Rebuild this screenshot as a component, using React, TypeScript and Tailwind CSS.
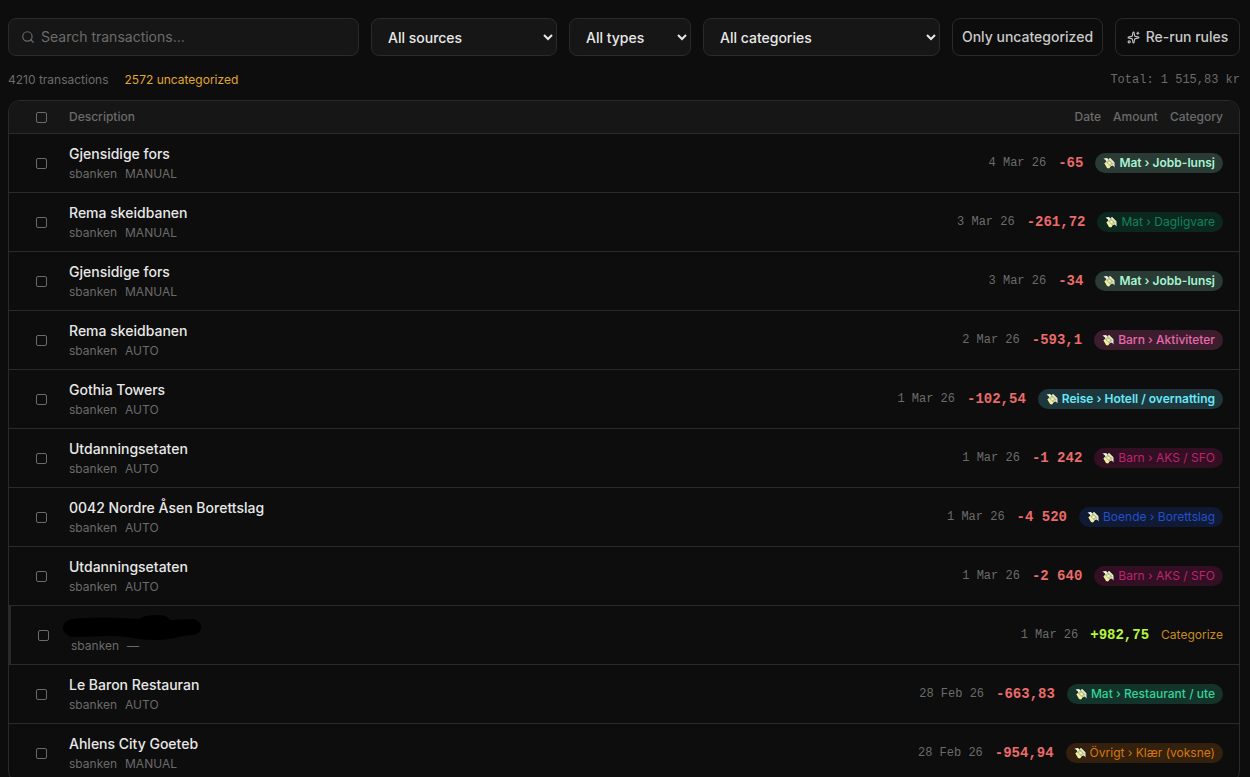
import React, { useState } from 'react';
import { Search, Sparkles } from 'lucide-react';
import clsx from 'clsx';

interface Transaction {
  id: number;
  description: string | null;
  method: string;
  date: string;
  amount: string;
  category?: string;
  chip?: string;
}

const JOBB_LUNSJ = 'bg-[#2a3a34] text-[#a7f3d0] font-semibold';
const AKS_SFO = 'bg-[#320f22] text-[#be2470]';

const TRANSACTIONS: Transaction[] = [
  { id: 1, description: 'Gjensidige fors', method: 'MANUAL', date: '4 Mar 26', amount: '-65', category: 'Mat › Jobb-lunsj', chip: JOBB_LUNSJ },
  { id: 2, description: 'Rema skeidbanen', method: 'MANUAL', date: '3 Mar 26', amount: '-261,72', category: 'Mat › Dagligvare', chip: 'bg-[#0c271e] text-[#10845f]' },
  { id: 3, description: 'Gjensidige fors', method: 'MANUAL', date: '3 Mar 26', amount: '-34', category: 'Mat › Jobb-lunsj', chip: JOBB_LUNSJ },
  { id: 4, description: 'Rema skeidbanen', method: 'AUTO', date: '2 Mar 26', amount: '-593,1', category: 'Barn › Aktiviteter', chip: 'bg-[#3b1d2e] text-[#e669ab] font-medium' },
  { id: 5, description: 'Gothia Towers', method: 'AUTO', date: '1 Mar 26', amount: '-102,54', category: 'Reise › Hotell / overnatting', chip: 'bg-[#1d373c] text-[#67e8f9] font-semibold' },
  { id: 6, description: 'Utdanningsetaten', method: 'AUTO', date: '1 Mar 26', amount: '-1 242', category: 'Barn › AKS / SFO', chip: AKS_SFO },
  { id: 7, description: '0042 Nordre Åsen Borettslag', method: 'AUTO', date: '1 Mar 26', amount: '-4 520', category: 'Boende › Borettslag', chip: 'bg-[#101a34] text-[#2350c8]' },
  { id: 8, description: 'Utdanningsetaten', method: 'AUTO', date: '1 Mar 26', amount: '-2 640', category: 'Barn › AKS / SFO', chip: AKS_SFO },
  { id: 9, description: null, method: '—', date: '1 Mar 26', amount: '+982,75' },
  { id: 10, description: 'Le Baron Restauran', method: 'AUTO', date: '28 Feb 26', amount: '-663,83', category: 'Mat › Restaurant / ute', chip: 'bg-[#14332a] text-[#34d399] font-medium' },
  { id: 11, description: 'Ahlens City Goeteb', method: 'MANUAL', date: '28 Feb 26', amount: '-954,94', category: 'Övrigt › Klær (voksne)', chip: 'bg-[#33200d] text-[#d9780b]' },
];

const SELECT_CLASS = 'h-[38px] px-3 bg-[#161616] border border-[#2a2a2a] rounded-lg text-sm font-medium text-[#e8e8e8] outline-none';
const BUTTON_CLASS = 'h-[38px] shrink-0 flex items-center justify-center gap-1.5 border border-[#2a2a2a] rounded-lg text-sm font-medium text-[#c9c9c9] whitespace-nowrap hover:bg-[#161616]';
const CHECKBOX_CLASS = 'appearance-none block size-[11px] border border-[#6b6b6b] rounded-[2px] checked:bg-[#6b6b6b]';

function MoneyIcon() {
  return (
    <svg viewBox="0 0 24 24" className="size-3 shrink-0" aria-hidden="true">
      <path d="M1 3 8 2l4 4-5 5-1-4z" fill="#f2f4ea" />
      <path d="M15 13l8-1v9l-3-4-4 1z" fill="#f2f4ea" />
      <path d="M3 13 14 2l9 9L12 22z" fill="#c6d094" />
      <path d="M3 13l3-3 9 9-3 4-4-1z" fill="#f3ee9c" />
      <path d="M14 2l9 9-2 2-9-9z" fill="#e6ebc8" />
      <path d="M7 10l8 8M11 6l9 9" stroke="#7f8a5c" strokeWidth="1" />
      <circle cx="13" cy="12" r="2.6" fill="#eef2cf" />
    </svg>
  );
}

function Redacted() {
  return (
    <svg viewBox="0 0 138 26" className="absolute -left-2 -top-px w-[138px] h-[26px]" aria-hidden="true">
      <path
        d="M9 4C30 2 55 3 76 4C80 1 87 0 95 0C101 0 105 2 107 5L130 4C135 5 138 8 138 12C138 17 134 20 129 20C118 20 111 25 92 25C75 25 66 21 50 21C35 21 24 22 10 22C4 21 0 17 0 13C0 8 4 5 9 4Z"
        fill="#000"
      />
    </svg>
  );
}

export default function App() {
  const [search, setSearch] = useState('');
  const [selected, setSelected] = useState<number[]>([]);

  const visible = TRANSACTIONS.filter(t =>
    (t.description ?? '').toLowerCase().includes(search.toLowerCase())
  );

  const toggle = (id: number) => {
    setSelected(prev => (prev.includes(id) ? prev.filter(x => x !== id) : [...prev, id]));
  };

  const toggleAll = () => {
    setSelected(selected.length === visible.length ? [] : visible.map(t => t.id));
  };

  return (
    <div className="min-h-screen bg-[#0d0d0d] px-2 pt-[18px] font-['Inter',sans-serif] text-[#e8e8e8]">
      <div className="flex pr-0.5 gap-3">
        <label className="flex-1 min-w-0 h-[38px] flex items-center gap-1.5 px-3 bg-[#161616] border border-[#2a2a2a] rounded-lg">
          <Search size={14} className="text-[#6b6b6b] shrink-0" />
          <input
            type="text"
            aria-label="Search transactions"
            placeholder="Search transactions…"
            value={search}
            onChange={(e) => setSearch(e.target.value)}
            className="flex-1 min-w-0 bg-transparent outline-none text-sm placeholder:text-[#6b6b6b]"
          />
        </label>
        <select aria-label="Source" className={clsx(SELECT_CLASS, 'w-[186px]')}>
          <option>All sources</option>
          <option>sbanken</option>
        </select>
        <select aria-label="Type" className={clsx(SELECT_CLASS, 'w-[122px]')}>
          <option>All types</option>
          <option>Expense</option>
          <option>Income</option>
        </select>
        <select aria-label="Category" className={clsx(SELECT_CLASS, 'w-[237px]')}>
          <option>All categories</option>
          <option>Mat</option>
          <option>Barn</option>
          <option>Reise</option>
        </select>
        <button className={clsx(BUTTON_CLASS, 'w-[151px]')}>Only uncategorized</button>
        <button className={clsx(BUTTON_CLASS, 'w-[125px]')}>
          <Sparkles size={13} /> Re-run rules
        </button>
      </div>

      <div className="mt-4 pr-0.5 flex items-center gap-4 text-xs text-[#6b6b6b]">
        <span>4210 transactions</span>
        <span className="text-[#e0a82e]">2572 uncategorized</span>
        <span className="ml-auto font-['Liberation_Mono',monospace]">Total: 1 515,83 kr</span>
      </div>

      <div className="mt-3 mr-0.5 border border-[#2a2a2a] rounded-xl overflow-hidden">
        <table className="block w-full text-left">
          <thead className="block bg-[#161616]">
            <tr className="flex items-center gap-3 px-4 py-2 border-b border-[#2a2a2a] text-xs text-[#6b6b6b]">
              <th className="w-8 flex justify-center">
                <input type="checkbox" aria-label="Select all" className={CHECKBOX_CLASS} checked={selected.length === visible.length} onChange={toggleAll} />
              </th>
              <th className="flex-1 font-medium">Description</th>
              <th className="font-medium">Date</th>
              <th className="font-medium">Amount</th>
              <th className="font-medium">Category</th>
            </tr>
          </thead>
          <tbody className="block divide-y divide-[#2a2a2a]">
            {visible.map(t => (
              <tr
                key={t.id}
                className={clsx('flex items-center gap-3 px-4 py-2.5 hover:bg-[#121212]', !t.category && 'border-l-2 border-l-[#2a2a2a]')}
              >
                <td className="w-8 flex justify-center">
                  <input type="checkbox" aria-label={`Select transaction ${t.id}`} className={CHECKBOX_CLASS} checked={selected.includes(t.id)} onChange={() => toggle(t.id)} />
                </td>
                <td className="relative flex-1 min-w-0">
                  <div className="h-5 text-sm font-medium truncate">{t.description}</div>
                  {!t.description && <Redacted />}
                  <div className="mt-0.5 flex gap-2 text-xs text-[#6b6b6b]">
                    <span>sbanken</span>
                    <span>{t.method}</span>
                  </div>
                </td>
                <td className="font-['Liberation_Mono',monospace] text-xs text-[#6b6b6b] whitespace-nowrap">{t.date}</td>
                <td
                  className={clsx(
                    "font-['Liberation_Mono',monospace] text-sm font-bold whitespace-nowrap",
                    t.amount.startsWith('+') ? 'text-[#b8f53d]' : 'text-[#e96b6b]'
                  )}
                >
                  {t.amount}
                </td>
                <td className="text-xs whitespace-nowrap">
                  {t.category ? (
                    <button className={clsx('h-5 flex items-center gap-1 px-2 rounded-full', t.chip)}>
                      <MoneyIcon />
                      {t.category}
                    </button>
                  ) : (
                    <button className="text-[#c98a1f] hover:underline">Categorize</button>
                  )}
                </td>
              </tr>
            ))}
          </tbody>
        </table>
      </div>
    </div>
  );
}
